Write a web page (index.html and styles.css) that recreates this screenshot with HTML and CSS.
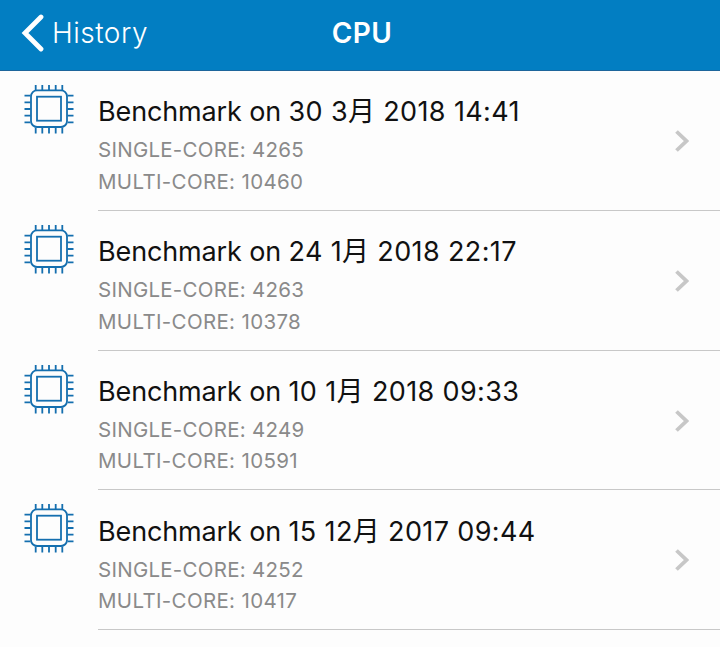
FILE: index.html
```html
<!DOCTYPE html>
<html lang="en">
<head>
<meta charset="utf-8">
<title>CPU</title>
<link rel="stylesheet" href="styles.css">
</head>
<body>
<svg class="defs" width="0" height="0" aria-hidden="true">
  <symbol id="chip" viewBox="0 0 50 50">
    <rect x="7" y="6.4" width="36" height="36.6" rx="6"/>
    <rect x="13" y="12.7" width="24" height="24"/>
    <path d="M11.7 1v5M18.3 1v5M25 1v5M31.7 1v5M38.3 1v5M11.7 43.5v6M18.3 43.5v6M25 43.5v6M31.7 43.5v6M38.3 43.5v6M.5 11.7h6M.5 18.3h6M.5 25h6M.5 31.7h6M.5 38.3h6M43.5 11.7h6M43.5 18.3h6M43.5 25h6M43.5 31.7h6M43.5 38.3h6"/>
  </symbol>
  <symbol id="chevron" viewBox="0 0 14 24"><path d="M1.5 2.5 11.4 12 1.5 21.5"/></symbol>
</svg>
<header class="bar">
  <a class="back"><svg class="back-icon" viewBox="0 0 24 40"><path d="M21 4 5 20 21 36"/></svg><span>History</span></a>
  <h1 class="heading">CPU</h1>
</header>
<main class="list">
  <article class="row">
    <svg class="chip"><use href="#chip"/></svg>
    <div class="body">
      <div class="text"><h2 class="title">Benchmark on <span class="date">30 3月 2018 14:41</span></h2><p class="score">SINGLE-CORE: 4265</p><p class="score multi">MULTI-CORE: 10460</p></div>
      <svg class="chevron"><use href="#chevron"/></svg>
    </div>
  </article>
  <article class="row">
    <svg class="chip"><use href="#chip"/></svg>
    <div class="body">
      <div class="text"><h2 class="title">Benchmark on <span class="date">24 1月 2018 22:17</span></h2><p class="score">SINGLE-CORE: 4263</p><p class="score multi">MULTI-CORE: 10378</p></div>
      <svg class="chevron"><use href="#chevron"/></svg>
    </div>
  </article>
  <article class="row">
    <svg class="chip"><use href="#chip"/></svg>
    <div class="body">
      <div class="text"><h2 class="title">Benchmark on <span class="date">10 1月 2018 09:33</span></h2><p class="score">SINGLE-CORE: 4249</p><p class="score multi">MULTI-CORE: 10591</p></div>
      <svg class="chevron"><use href="#chevron"/></svg>
    </div>
  </article>
  <article class="row">
    <svg class="chip"><use href="#chip"/></svg>
    <div class="body">
      <div class="text"><h2 class="title">Benchmark on <span class="date">15 12月 2017 09:44</span></h2><p class="score">SINGLE-CORE: 4252</p><p class="score multi">MULTI-CORE: 10417</p></div>
      <svg class="chevron"><use href="#chevron"/></svg>
    </div>
  </article>
</main>
</body>
</html>
```
FILE: styles.css
```css
* { box-sizing: border-box; }
body {
  margin: 0;
  height: 647px;
  overflow: hidden;
  background: #fdfdfd;
  color: #111;
  font-family: Inter, "Noto Sans CJK SC", sans-serif;
}
h1, h2, p { margin: 0; }
.defs { display: block; height: 0; }
.bar {
  display: grid;
  grid-template-columns: 1fr auto 1fr;
  align-items: center;
  height: 71px;
  padding: 0 0 5px 20px;
  background: #027ec2;
  border-bottom: 1px solid #1d659b;
  color: #fff;
}
.back { display: flex; align-items: center; font-size: 28px; font-weight: 300; letter-spacing: .5px; }
.back-icon { width: 24px; height: 40px; margin-right: 8px; fill: none; stroke: #fff; stroke-width: 4.8; stroke-linecap: round; stroke-linejoin: miter; }
.heading { font-size: 28px; font-weight: 600; line-height: 34px; letter-spacing: .4px; margin-right: 16px; }
.row { display: flex; height: 139.83px; }
.chip { width: 50px; height: 50px; margin: 13px 24px 0 24px; flex: none; fill: none; stroke: #146faf; stroke-width: 1.8; }
.body { display: flex; flex: 1; justify-content: space-between; align-items: center; padding-right: 31px; border-bottom: 1px solid #c8c8c8; }
.text { padding-top: 6.8px; }
.title { font-size: 27px; font-weight: 400; line-height: 44px; letter-spacing: -.14px; white-space: nowrap; }
.date { letter-spacing: .37px; }
.score { font-size: 20.5px; font-weight: 400; line-height: 31.6px; color: #8a8a8a; letter-spacing: .26px; white-space: nowrap; }
.multi { letter-spacing: .34px; }
.chevron { width: 14px; height: 24px; margin-top: 1px; fill: none; stroke: #c7c7c7; stroke-width: 3.8; }
```
